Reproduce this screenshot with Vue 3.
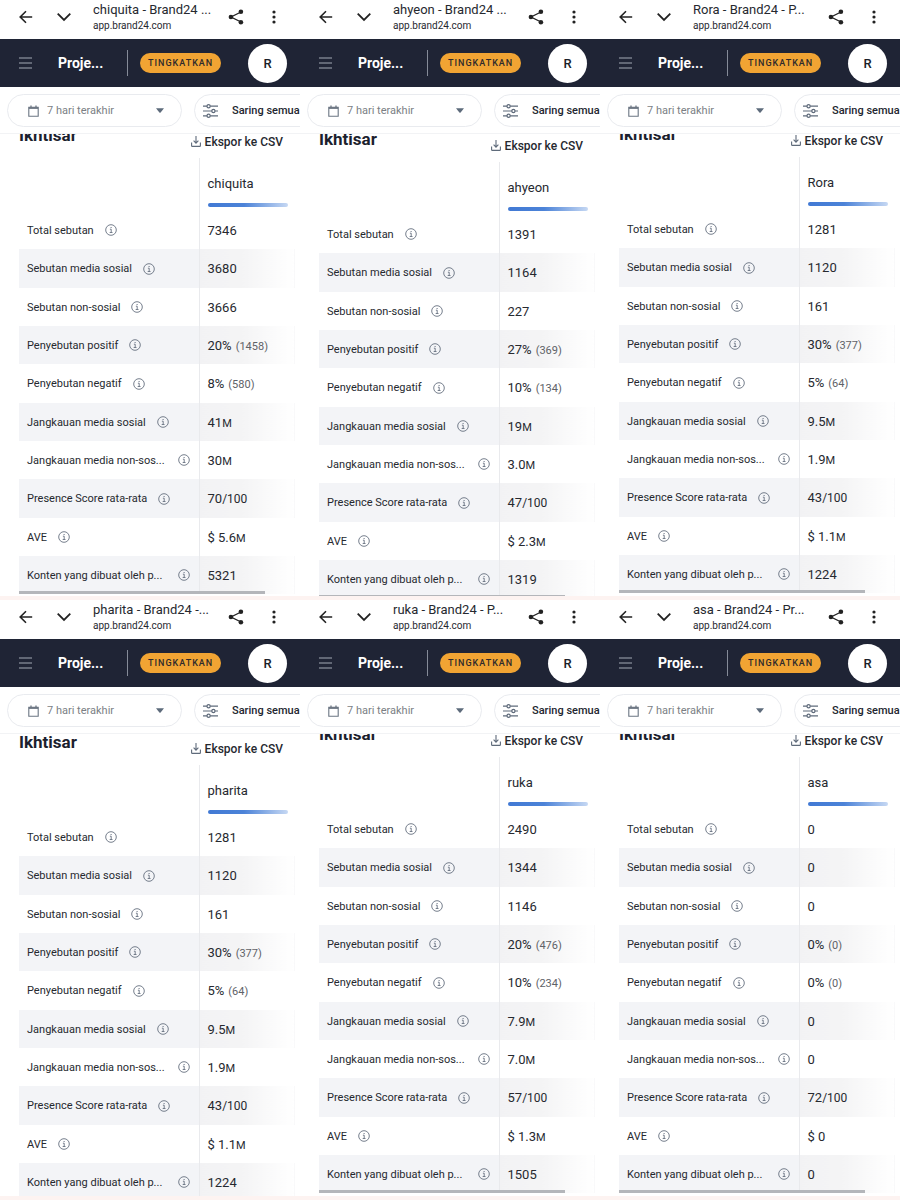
<script setup>
const labels = [
  'Total sebutan',
  'Sebutan media sosial',
  'Sebutan non-sosial',
  'Penyebutan positif',
  'Penyebutan negatif',
  'Jangkauan media sosial',
  'Jangkauan media non-sos...',
  'Presence Score rata-rata',
  'AVE',
  'Konten yang dibuat oleh p...'
]

// Each value is [main, unit, detail]
const plain = (v) => [String(v), '', '']
const pct = (p, n) => [p + '%', '', '(' + n + ')']
const unit = (v, u) => [v, u, '']

const panels = [
  {
    name: 'chiquita', title: 'chiquita - Brand24 ...', scroll: 7,
    values: [plain(7346), plain(3680), plain(3666), pct(20, 1458), pct(8, 580), unit('41', 'M'), unit('30', 'M'), unit('70', '/100'), unit('$ 5.6', 'M'), plain(5321)]
  },
  {
    name: 'ahyeon', title: 'ahyeon - Brand24 ...', scroll: 3,
    values: [plain(1391), plain(1164), plain(227), pct(27, 369), pct(10, 134), unit('19', 'M'), unit('3.0', 'M'), unit('47', '/100'), unit('$ 2.3', 'M'), plain(1319)]
  },
  {
    name: 'Rora', title: 'Rora - Brand24 - P...', scroll: 8,
    values: [plain(1281), plain(1120), plain(161), pct(30, 377), pct(5, 64), unit('9.5', 'M'), unit('1.9', 'M'), unit('43', '/100'), unit('$ 1.1', 'M'), plain(1224)]
  },
  {
    name: 'pharita', title: 'pharita - Brand24 -...', scroll: 0,
    values: [plain(1281), plain(1120), plain(161), pct(30, 377), pct(5, 64), unit('9.5', 'M'), unit('1.9', 'M'), unit('43', '/100'), unit('$ 1.1', 'M'), plain(1224)]
  },
  {
    name: 'ruka', title: 'ruka - Brand24 - P...', scroll: 8,
    values: [plain(2490), plain(1344), plain(1146), pct(20, 476), pct(10, 234), unit('7.9', 'M'), unit('7.0', 'M'), unit('57', '/100'), unit('$ 1.3', 'M'), plain(1505)]
  },
  {
    name: 'asa', title: 'asa - Brand24 - Pr...', scroll: 8,
    values: [plain(0), plain(0), plain(0), pct(0, 0), pct(0, 0), plain(0), plain(0), unit('72', '/100'), plain('$ 0'), plain(0)]
  }
]
</script>

<template>
  <main class="board">
    <section v-for="p in panels" :key="p.name" class="panel">
      <div class="browser">
        <button class="icon-btn" aria-label="Kembali">
          <svg width="14" height="14" viewBox="0 0 14 14" fill="none" stroke="#222" stroke-width="1.6"><path d="M13.2 7H1.4M7 1.2 1.2 7 7 12.8" /></svg>
        </button>
        <button class="icon-btn chevron" aria-label="Buka">
          <svg width="14" height="14" viewBox="0 0 14 14" fill="none" stroke="#222" stroke-width="1.8"><path d="m.7 3.6 6.3 6.3 6.3-6.3" /></svg>
        </button>
        <div class="page">
          <div class="page-title">{{ p.title }}</div>
          <div class="page-url">app.brand24.com</div>
        </div>
        <button class="icon-btn" aria-label="Bagikan">
          <svg width="16" height="16" viewBox="0 0 16 16" fill="#222"><path d="M13 3 3 8l10 5" fill="none" stroke="#222" stroke-width="1.3" /><circle cx="12.9" cy="2.7" r="2.3" /><circle cx="2.9" cy="8" r="2.3" /><circle cx="12.9" cy="13.3" r="2.3" /></svg>
        </button>
        <button class="icon-btn more" aria-label="Menu">
          <svg width="4" height="14" viewBox="0 0 4 14" fill="#222"><circle cx="2" cy="2" r="1.6" /><circle cx="2" cy="7" r="1.6" /><circle cx="2" cy="12" r="1.6" /></svg>
        </button>
      </div>

      <header class="nav">
        <button class="icon-btn" aria-label="Navigasi">
          <svg width="13" height="12" viewBox="0 0 13 12" stroke="#a3aab5" stroke-width="1.2"><path d="M0 1h13M0 6h13M0 11h13" /></svg>
        </button>
        <div class="project">Proje...</div>
        <div class="rule"></div>
        <button class="upgrade">TINGKATKAN</button>
        <button class="avatar">R</button>
      </header>

      <div class="filters">
        <label class="pill range">
          <svg width="11" height="12" viewBox="0 0 11 12" fill="none" stroke="#6b7583"><path d="M.8 2.3h9.4v8.9H.8z" stroke-width="1.1" /><path d="M.8 3h9.4" stroke-width="1.8" /><path d="M3 .4v2M8 .4v2" stroke-width="1.3" /></svg>
          <select aria-label="Rentang waktu">
            <option>7 hari terakhir</option>
          </select>
          <svg class="caret" width="8" height="5" viewBox="0 0 8 5" fill="#5d6b7b"><path d="M0 .2h8L4.6 4.5q-.6.6-1.2 0z" /></svg>
        </label>
        <button class="pill filter">
          <svg width="15" height="14" viewBox="0 0 15 14" fill="#fff" stroke="#5f6b7b" stroke-width="1.2"><path d="M0 2.2h15M0 7h15M0 11.8h15" /><circle cx="5.6" cy="2.2" r="1.6" /><circle cx="10.4" cy="7" r="1.6" /><circle cx="5.6" cy="11.8" r="1.6" /></svg>
          <span>Saring semua</span>
        </button>
      </div>

      <div class="viewport">
        <div class="content" :style="{ marginTop: -p.scroll + 'px' }">
          <div class="head">
            <h2>Ikhtisar</h2>
            <button class="export">
              <svg width="10" height="11" viewBox="0 0 10 11" fill="none" stroke="#5f6b7b" stroke-width="1.1"><path d="M5 0v7M2.6 4.7 5 7.1l2.4-2.4M.6 6.6v3.1q0 .7.7.7h7.4q.7 0 .7-.7V6.6" /></svg>
              <span>Ekspor ke CSV</span>
            </button>
          </div>
          <table>
            <thead>
              <tr>
                <td class="label"></td>
                <th class="value" scope="col">
                  <div class="name">{{ p.name }}</div>
                  <div class="bar"></div>
                </th>
              </tr>
            </thead>
            <tbody>
              <tr v-for="(l, i) in labels" :key="l">
                <th class="label" :class="{ cut: l.endsWith('...') }" scope="row">
                  <div class="cell">
                    <span>{{ l }}</span>
                    <svg width="12" height="12" viewBox="0 0 12 12" fill="none" stroke="#667080"><circle cx="6" cy="6" r="5.3" stroke-width=".9" /><path d="M4.9 5.2h1.3v3.2M4.7 8.5h2.8" stroke-width=".9" /><path d="M5.6 3.5h1" stroke-width="1.2" /></svg>
                  </div>
                </th>
                <td class="value">{{ p.values[i][0] }}<small v-if="p.values[i][1]" :class="{ per: p.values[i][1] !== 'M' }">{{ p.values[i][1] }}</small><span v-if="p.values[i][2]" class="detail">{{ p.values[i][2] }}</span></td>
              </tr>
            </tbody>
          </table>
          <div class="scrollbar"></div>
        </div>
      </div>
    </section>
  </main>
</template>

<style>
body {
  margin: 0;
  background: #fff;
}
</style>

<style scoped>
.board {
  display: grid;
  grid-template-columns: repeat(3, minmax(0, 1fr));
  grid-template-rows: repeat(2, minmax(0, 1fr));
  height: 100vh;
  font-family: Roboto, "Liberation Sans", sans-serif;
  color: #26292f;
}
.panel {
  display: flex;
  flex-direction: column;
  box-sizing: border-box;
  min-width: 0;
  overflow: hidden;
  background: #fff;
  border-bottom: 4px solid #fdf3f1;
}
button {
  padding: 0;
  border: 0;
  background: none;
  font: inherit;
  color: inherit;
}
svg {
  display: block;
  flex: none;
}
.icon-btn {
  flex: none;
}
.browser {
  display: flex;
  flex: none;
  align-items: center;
  box-sizing: border-box;
  height: 39px;
  padding: 0 24px 6px 19px;
}
.chevron {
  margin-left: 24px;
}
.page {
  flex: 1;
  min-width: 0;
  margin-left: 22px;
  white-space: nowrap;
}
.page-title {
  font-size: 13px;
  line-height: 18px;
}
.page-url {
  font-size: 10px;
  line-height: 14px;
}
.more {
  margin-left: 28px;
}
.nav {
  display: flex;
  flex: none;
  align-items: center;
  height: 48px;
  padding: 0 13px 0 19px;
  background: #1f2435;
}
.project {
  width: 69px;
  margin-left: 26px;
  color: #fff;
  font-size: 14px;
  font-weight: 700;
}
.rule {
  width: 1px;
  height: 26px;
  background: #858b98;
}
.upgrade {
  height: 20px;
  margin-left: 12px;
  padding: 0 8px;
  border-radius: 10px;
  background: #f1a433;
  color: #2e2a2c;
  font-size: 9px;
  font-weight: 500;
  letter-spacing: 1px;
}
.avatar {
  width: 39px;
  height: 39px;
  margin-left: auto;
  border-radius: 50%;
  background: #fff;
  color: #1b1e28;
  font-size: 13px;
  font-weight: 500;
}
.filters {
  display: flex;
  flex: none;
  gap: 12px;
  box-sizing: border-box;
  height: 47px;
  padding: 7px 0 6px 7px;
  border-bottom: 1px solid #f2f3f5;
  overflow: hidden;
}
.pill {
  display: flex;
  align-items: center;
  box-sizing: border-box;
  border: 1px solid #e9ebef;
  border-radius: 17px;
  background: #fff;
}
.range {
  flex: 1;
  padding: 0 17px 0 20px;
}
.range select {
  flex: 1;
  min-width: 0;
  margin-left: 8px;
  padding: 0;
  border: 0;
  appearance: none;
  background: none;
  color: #7b7f85;
  font: inherit;
  font-size: 11px;
}
.filter {
  flex: none;
  width: 124px;
  margin-right: -18px;
  padding-left: 8px;
  gap: 14px;
  color: #23262f;
  font-size: 11px;
  font-weight: 500;
  white-space: nowrap;
}
.viewport {
  flex: 1;
  min-height: 0;
  overflow: hidden;
}
.content {
  padding: 0 5px 0 19px;
}
.head {
  display: flex;
  justify-content: space-between;
  height: 31px;
  padding-right: 12px;
}
h2 {
  margin: 0;
  color: #1c1f2e;
  font-size: 17px;
  font-weight: 700;
  line-height: 16px;
}
.export {
  display: flex;
  align-items: center;
  gap: 4px;
  height: 29px;
  font-size: 12px;
  font-weight: 500;
}
table {
  width: 100%;
  border-collapse: collapse;
  table-layout: fixed;
}
th,
td {
  padding: 0;
  font-weight: 400;
  text-align: left;
  white-space: nowrap;
}
thead tr {
  height: 53px;
}
tbody tr {
  height: 38px;
}
tbody tr:nth-child(3n + 2) {
  height: 39px;
}
tbody tr:nth-child(even) .label {
  background: #f3f4f7;
}
tbody tr:nth-child(even) .value {
  background: linear-gradient(90deg, #f2f2f4, #f4f4f5 45%, #fff);
}
.label {
  padding-left: 8px;
  font-size: 11px;
}
.cell {
  display: flex;
  align-items: center;
  gap: 11px;
}
.cut .cell {
  justify-content: space-between;
  gap: 0;
  margin-right: 9px;
}
.value {
  box-sizing: border-box;
  width: 96px;
  padding-left: 8px;
  border-left: 1px solid #e9eaed;
  font-size: 13px;
}
.value small {
  font-size: 11px;
}
.value small.per {
  font-size: 12px;
}
.detail {
  margin-left: 4px;
  color: #606267;
  font-size: 11px;
}
.name {
  margin-top: 16px;
  line-height: 18px;
}
.bar {
  width: 80px;
  height: 4px;
  margin: 10px 0 4px;
  border-radius: 2px;
  background: linear-gradient(90deg, #4179d4, #4c83d8 45%, #c6d8f3);
}
.scrollbar {
  height: 3px;
  margin: -3px 30px 0 0;
  position: relative;
  background: #b4b6ba;
}
</style>
